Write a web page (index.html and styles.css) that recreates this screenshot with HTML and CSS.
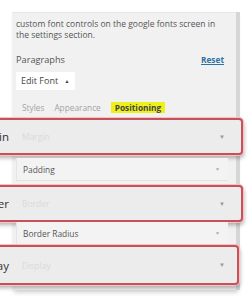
FILE: index.html
```html
<!DOCTYPE html>
<html>
<head>
<meta charset="utf-8">
<link rel="stylesheet" href="styles.css">
</head>
<body>
<div class="panel">
  <p class="desc">custom font controls on the google fonts screen in the settings section.</p>
  <div class="head">
    <span class="title">Paragraphs</span>
    <a class="reset">Reset</a>
  </div>
  <div class="edit">Edit Font <span class="up">&#9650;</span></div>
  <div class="tabs">
    <span class="tab">Styles</span>
    <span class="tab">Appearance</span>
    <span class="tab active">Positioning</span>
  </div>
  <div class="hl hl1">
    <span class="lbl">Margin</span>
    <span class="ph">Margin</span>
    <span class="arr">&#9660;</span>
  </div>
  <div class="row row1">
    <span class="name">Padding</span>
    <span class="arr sm">&#9660;</span>
  </div>
  <div class="hl hl2">
    <span class="lbl">Border</span>
    <span class="ph">Border</span>
    <span class="arr">&#9660;</span>
  </div>
  <div class="row row2">
    <span class="name">Border Radius</span>
    <span class="arr sm">&#9660;</span>
  </div>
  <div class="hl hl3">
    <span class="lbl">Display</span>
    <span class="ph">Display</span>
    <span class="arr">&#9660;</span>
  </div>
</div>
</body>
</html>
```
FILE: styles.css
```css
html, body {
  margin: 0;
  padding: 0;
  background: #fff;
  width: 250px;
  height: 300px;
  overflow: hidden;
  font-family: "Open Sans", "Noto Sans", sans-serif;
}
.panel {
  margin: 12px 0 0 12px;
  padding: 0 8px 0 4px;
  box-sizing: border-box;
  width: 224px;
  height: 278px;
  background: #f1f1f1;
  border-top: 1px solid #e6e6e6;
  box-shadow: 4px 0 0 #d6d6d6, 2px 3px 4px rgba(0,0,0,0.15);
}
.desc {
  margin: 0;
  padding-top: 5px;
  font-size: 8.5px;
  line-height: 11px;
  color: #555;
}
.head {
  display: flex;
  justify-content: space-between;
  align-items: center;
  height: 12px;
  margin-top: 13px;
  padding-right: 4px;
}
.title {
  font-size: 9.2px;
  color: #555;
}
.reset {
  font-size: 8.3px;
  font-weight: 700;
  color: #2e73a3;
  text-decoration: underline;
}
.edit {
  display: inline-block;
  margin-top: 7px;
  background: #fff;
  font-size: 9px;
  color: #444;
  height: 18px;
  line-height: 18px;
  padding: 0 6px 0 5px;
}
.up {
  font-size: 5px;
  margin-left: 4px;
  vertical-align: 1px;
}
.tabs {
  display: flex;
  gap: 10px;
  margin-top: 12px;
  padding-left: 6px;
  font-size: 8.3px;
  line-height: 11px;
  color: #a3a3a3;
}
.tab.active {
  background: #eef01a;
  color: #444;
  font-weight: 700;
  padding: 0 4px;
  margin-left: 0;
}
.hl {
  display: flex;
  align-items: center;
  margin: 5px -15px 0 -66px;
  height: 37px;
  box-sizing: border-box;
  border: 2px solid #c8505a;
  border-radius: 4px;
  background: #ececec;
  box-shadow: 0 0 0 1px #f2c4c6, 1px 3px 4px rgba(0,0,0,0.3);
}
.hl2 { margin-top: 4px; }
.hl3 { margin: 0 -11px 0 -66px; height: 40px; }
.lbl {
  width: 57px;
  text-align: right;
  color: #333;
  font-size: 11.5px;
  flex: none;
}
.ph {
  flex: 1;
  margin-left: 13px;
  color: #dadada;
  font-size: 8.5px;
}
.arr {
  font-size: 6px;
  color: #999;
  margin-right: 16px;
}
.hl3 .arr { margin-right: 12px; }
.row {
  display: flex;
  align-items: center;
  justify-content: space-between;
  height: 22px;
  padding: 0 8px 0 6px;
  border-left: 1px solid #e4e4e4;
  border-bottom: 1px solid #e4e4e4;
  background: #f3f3f3;
  font-size: 8.4px;
  color: #555;
}
.row1 { margin-top: 3px; }
.row2 { margin-top: 0; }
.arr.sm {
  font-size: 5px;
  color: #aaa;
  margin-right: 0;
}
```
